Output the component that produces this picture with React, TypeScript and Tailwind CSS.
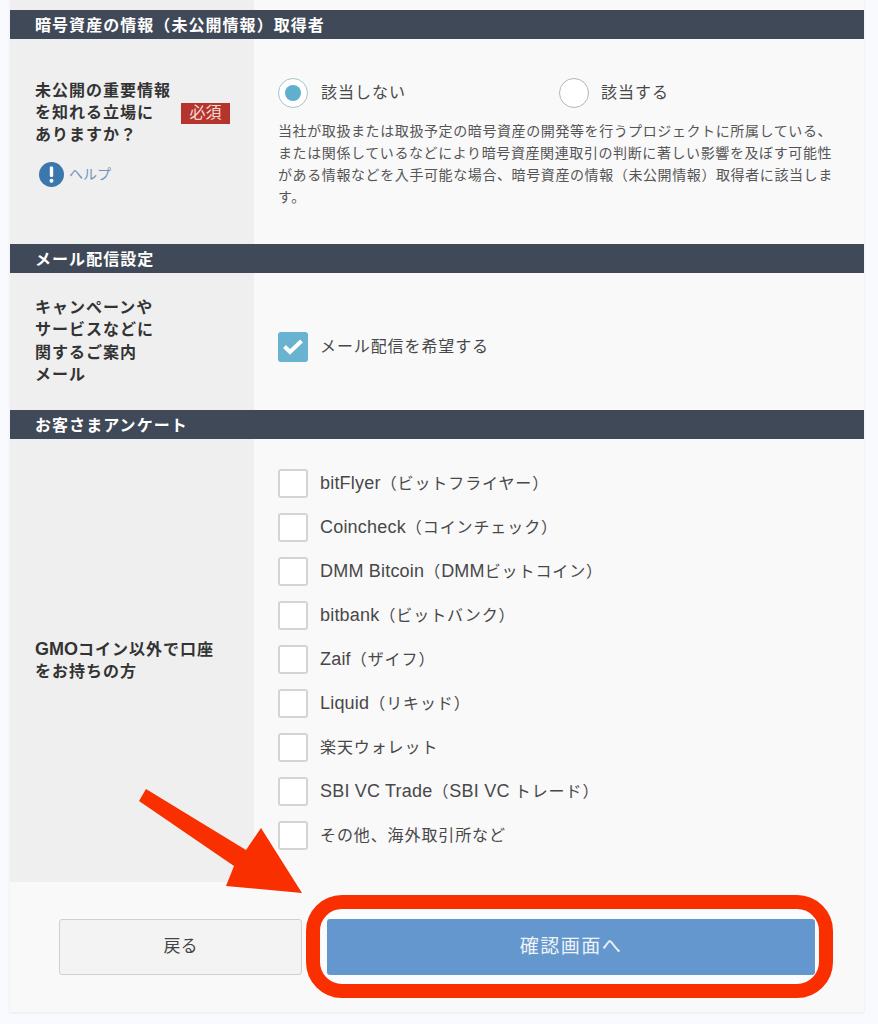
const font = { fontFamily: '"Liberation Sans", "Noto Sans CJK JP", sans-serif' };

function Header({ children }: { children: React.ReactNode }) {
  return (
    <div className="h-[29px] bg-[#404957] pl-[25px] text-[16px] font-bold leading-[31px] tracking-[1.05px] text-white">
      {children}
    </div>
  );
}

function Box() {
  return <span className="h-[29px] w-[30px] shrink-0 rounded-[3px] border-2 border-[#d4d4d4] bg-white" />;
}

function Mixed({ text }: { text: string }) {
  const parts = text.split(/([A-Za-z][A-Za-z ]*)/).filter(Boolean);
  return (
    <>
      {parts.map((p, i) =>
        /^[A-Za-z]/.test(p) ? (
          <span key={i} className="text-[18px] tracking-[0.2px]">
            {p}
          </span>
        ) : (
          <span key={i} className="text-[16px] tracking-[0.9px]">
            {p}
          </span>
        ),
      )}
    </>
  );
}

const options = [
  'bitFlyer（ビットフライヤー）',
  'Coincheck（コインチェック）',
  'DMM Bitcoin（DMMビットコイン）',
  'bitbank（ビットバンク）',
  'Zaif（ザイフ）',
  'Liquid（リキッド）',
  '楽天ウォレット',
  'SBI VC Trade（SBI VC トレード）',
  'その他、海外取引所など',
];

export default function App() {
  return (
    <div className="relative h-[1024px] w-[878px] overflow-hidden bg-[#f8fafd] px-[10px] text-[#484848]" style={font}>
      <div className="relative h-[1012px] w-[854px] bg-[#f9f9fa] shadow-[0_1px_3px_rgba(0,0,0,0.07)]">
        <div className="grid h-[10px] grid-cols-[244px_1fr]">
          <div className="bg-[#efefef]" />
          <div />
        </div>

        <Header>暗号資産の情報（未公開情報）取得者</Header>
        <div className="grid h-[205px] grid-cols-[244px_1fr]">
          <div className="bg-[#efefef] pl-[25px] pt-[41px]">
            <div className="flex items-center gap-[10px]">
              <div className="w-[136px] whitespace-nowrap text-[16px] font-bold leading-[22px] tracking-[1px] text-[#333]">
                未公開の重要情報
                <br />
                を知れる立場に
                <br />
                ありますか？
              </div>
              <span className="flex h-[21px] w-[49px] items-center justify-center bg-[#b5352d] text-[16px] text-[#f3d9d6]">
                必須
              </span>
            </div>
            <div className="mt-[16px] flex items-center gap-[5px] pl-[4px]">
              <svg width="25" height="25" viewBox="0 0 25 25">
                <circle cx="12.5" cy="12.5" r="12.5" fill="#3b76ad" />
                <rect x="10.8" y="4.5" width="3.4" height="10.5" rx="1.2" fill="#fff" />
                <circle cx="12.5" cy="18.8" r="2" fill="#fff" />
              </svg>
              <span className="text-[14px] text-[#6f96b8]">ヘルプ</span>
            </div>
          </div>
          <div className="pl-[24px] pr-[26px] pt-[39px]">
            <div className="flex items-center">
              <span className="flex h-[30px] w-[30px] items-center justify-center rounded-full border-[1.5px] border-[#a5c3ca] bg-white">
                <span className="h-[16px] w-[16px] rounded-full bg-[#5fb0cd]" />
              </span>
              <span className="ml-[13px] w-[238px] text-[16px] tracking-[1px]">該当しない</span>
              <span className="h-[30px] w-[30px] rounded-full border-[1.5px] border-[#b5b5b5] bg-white" />
              <span className="ml-[12px] text-[16px] tracking-[1px]">該当する</span>
            </div>
            <p className="mt-[12px] text-[14px] leading-[22px] tracking-[0.6px] text-[#555]">
              当社が取扱または取扱予定の暗号資産の開発等を行うプロジェクトに所属している、または関係しているなどにより暗号資産関連取引の判断に著しい影響を及ぼす可能性がある情報などを入手可能な場合、暗号資産の情報（未公開情報）取得者に該当します。
            </p>
          </div>
        </div>

        <Header>メール配信設定</Header>
        <div className="grid h-[137px] grid-cols-[244px_1fr]">
          <div className="flex items-center bg-[#efefef] pl-[25px] text-[16px] font-bold leading-[22.4px] tracking-[1px] text-[#333]">
            <div>
              キャンペーンや
              <br />
              サービスなどに
              <br />
              関するご案内
              <br />
              メール
            </div>
          </div>
          <div className="flex items-center pl-[24px] pt-[10px]">
            <span className="flex h-[30px] w-[30px] items-center justify-center rounded-[3px] bg-[#68b3cf]">
              <svg width="22" height="17" viewBox="0 0 22 17" fill="none">
                <path d="M2.5 8.5 L8 14 L19.5 3" stroke="#fff" strokeWidth="4" />
              </svg>
            </span>
            <span className="ml-[12px] text-[16px] tracking-[0.9px]">メール配信を希望する</span>
          </div>
        </div>

        <Header>お客さまアンケート</Header>
        <div className="grid h-[443px] grid-cols-[244px_1fr]">
          <div className="flex items-center bg-[#efefef] pl-[25px] text-[16px] font-bold leading-[22px] tracking-[1px] text-[#333]">
            <div>
              <span className="text-[18px] tracking-[0px]">GMO</span>コイン以外で口座
              <br />
              をお持ちの方
            </div>
          </div>
          <div className="flex flex-col gap-[15px] pl-[24px] pt-[30px]">
            {options.map((o) => (
              <div key={o} className="flex h-[29px] items-center">
                <Box />
                <span className="ml-[12px] leading-[29px]">
                  <Mixed text={o} />
                </span>
              </div>
            ))}
          </div>
        </div>

        <div className="flex gap-[25px] pl-[49px] pt-[37px]">
          <button className="relative z-10 h-[56px] w-[243px] rounded-[3px] border border-[#d0d0d0] bg-[#f3f3f3] text-[17px] text-[#444]">
            戻る
          </button>
          <button className="relative z-10 h-[56px] w-[488px] rounded-[3px] bg-[#6497cd] text-[19px] tracking-[1.5px] text-[#eef3f8]">
            確認画面へ
          </button>
        </div>

        <div className="absolute left-[296px] top-[895px] h-[103px] w-[527px] rounded-[36px] border-[14px] border-[#f92f00] bg-[#fbfcfd]" />
      </div>

      <svg className="absolute left-0 top-0 z-20" width="878" height="1024" viewBox="0 0 878 1024">
        <polygon points="146,789 246,850 261,828 302,893 226,886 234,866 139,801" fill="#f92f00" />
      </svg>
    </div>
  );
}
